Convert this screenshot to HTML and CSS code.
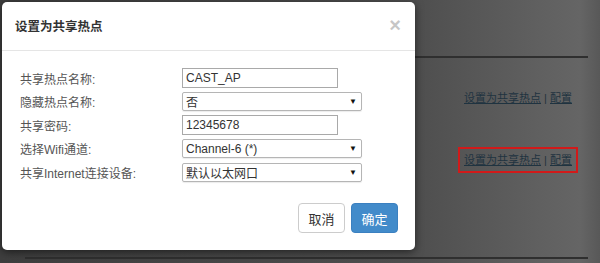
FILE: index.html
```html
<!DOCTYPE html>
<html lang="zh-CN">
<head>
<meta charset="utf-8">
<title>设置为共享热点</title>
<link rel="stylesheet" href="styles.css">
</head>
<body>
<div class="page">
  <div class="backdrop">
    <div class="rule rule-top"></div>
    <div class="link-row row-a">
      <span class="links"><a href="#">设置为共享热点</a> | <a href="#">配置</a></span>
    </div>
    <div class="link-row row-b">
      <span class="links boxed"><a href="#">设置为共享热点</a> | <a href="#">配置</a></span>
    </div>
    <div class="rule rule-bottom"></div>
  </div>

  <div class="modal">
    <div class="modal-header">
      <h4 class="modal-title">设置为共享热点</h4>
      <span class="close">×</span>
    </div>
    <div class="modal-body">
      <div class="form-row">
        <label>共享热点名称:</label>
        <div class="field input">CAST_AP</div>
      </div>
      <div class="form-row">
        <label>隐藏热点名称:</label>
        <div class="field select"><span>否</span><span class="arrow">▼</span></div>
      </div>
      <div class="form-row">
        <label>共享密码:</label>
        <div class="field input">12345678</div>
      </div>
      <div class="form-row">
        <label>选择Wifi通道:</label>
        <div class="field select"><span>Channel-6 (*)</span><span class="arrow">▼</span></div>
      </div>
      <div class="form-row">
        <label>共享Internet连接设备:</label>
        <div class="field select"><span>默认以太网口</span><span class="arrow">▼</span></div>
      </div>
    </div>
    <div class="modal-footer">
      <button class="btn btn-default">取消</button>
      <button class="btn btn-primary">确定</button>
    </div>
  </div>
</div>
</body>
</html>
```

FILE: styles.css
```css
html, body {
  margin: 0;
  padding: 0;
}
body {
  width: 600px;
  height: 263px;
  overflow: hidden;
  font-family: "Liberation Sans", "Noto Sans CJK SC", sans-serif;
  background: linear-gradient(to right, #3e3e3e 0px, #454545 200px, #4f4f4f 420px, #606060 540px, #656565 580px, #585858 600px);
}
.page {
  position: relative;
  width: 600px;
  height: 263px;
}
.backdrop {
  padding: 56px 12px 0 25px;
  display: flex;
  flex-direction: column;
}
.rule {
  height: 2px;
  background: #2f2f2f;
}
.link-row {
  display: flex;
  justify-content: flex-end;
  font-size: 11px;
  color: #26333c;
}
.row-a {
  margin-top: 33px;
  padding-right: 16px;
}
.row-b {
  margin-top: 42px;
  padding-right: 10px;
}
.links {
  line-height: 14px;
}
.links a {
  color: #1f3340;
  text-decoration: underline;
}
.boxed {
  border: 2px solid #d11a1a;
  padding: 4px 4px 4px 4px;
}
.rule-bottom {
  margin-top: 84px;
}

.modal {
  position: absolute;
  left: 2px;
  top: 2px;
  width: 413px;
  height: 248px;
  background: #fff;
  border-radius: 5px;
  box-shadow: 0 2px 8px rgba(0, 0, 0, 0.55);
  display: flex;
  flex-direction: column;
  box-sizing: border-box;
}
.modal-header {
  height: 46px;
  border-bottom: 1px solid #e5e5e5;
  display: flex;
  align-items: center;
  justify-content: space-between;
  padding: 0 13px 2px 13px;
}
.modal-title {
  margin: 0;
  font-size: 12.5px;
  font-weight: bold;
  color: #333;
}
.close {
  font-size: 20px;
  font-weight: bold;
  color: #000;
  opacity: 0.22;
  line-height: 1;
  margin-right: 1px;
}
.modal-body {
  padding: 17px 0 0 18px;
  display: flex;
  flex-direction: column;
  gap: 3.5px;
}
.form-row {
  display: flex;
  align-items: center;
  height: 20px;
}
.form-row label {
  width: 162px;
  font-size: 12px;
  color: #555;
}
.field {
  box-sizing: border-box;
  height: 20px;
  border: 1px solid #a9a9a9;
  font-size: 12px;
  color: #333;
  padding: 0 3px;
  display: flex;
  align-items: center;
}
.input {
  width: 156px;
}
.select {
  width: 180px;
  height: 19px;
  border-color: #b5b5b5;
  border-radius: 2px;
  justify-content: space-between;
  box-shadow: 0 1px 1px rgba(0,0,0,0.08);
}
.arrow {
  font-size: 8px;
  color: #111;
  margin-right: 1px;
}
.modal-footer {
  margin-top: auto;
  padding: 0 17px 17px 0;
  display: flex;
  justify-content: flex-end;
  gap: 6px;
}
.btn {
  height: 30px;
  width: 47px;
  border-radius: 4px;
  font-family: "Liberation Sans", "Noto Sans CJK SC", sans-serif;
  font-size: 13px;
  padding: 0;
  border: 1px solid #ccc;
}
.btn-default {
  background: #fff;
  color: #333;
}
.btn-primary {
  background: #428bca;
  border-color: #3b80c0;
  color: #fff;
}
```
